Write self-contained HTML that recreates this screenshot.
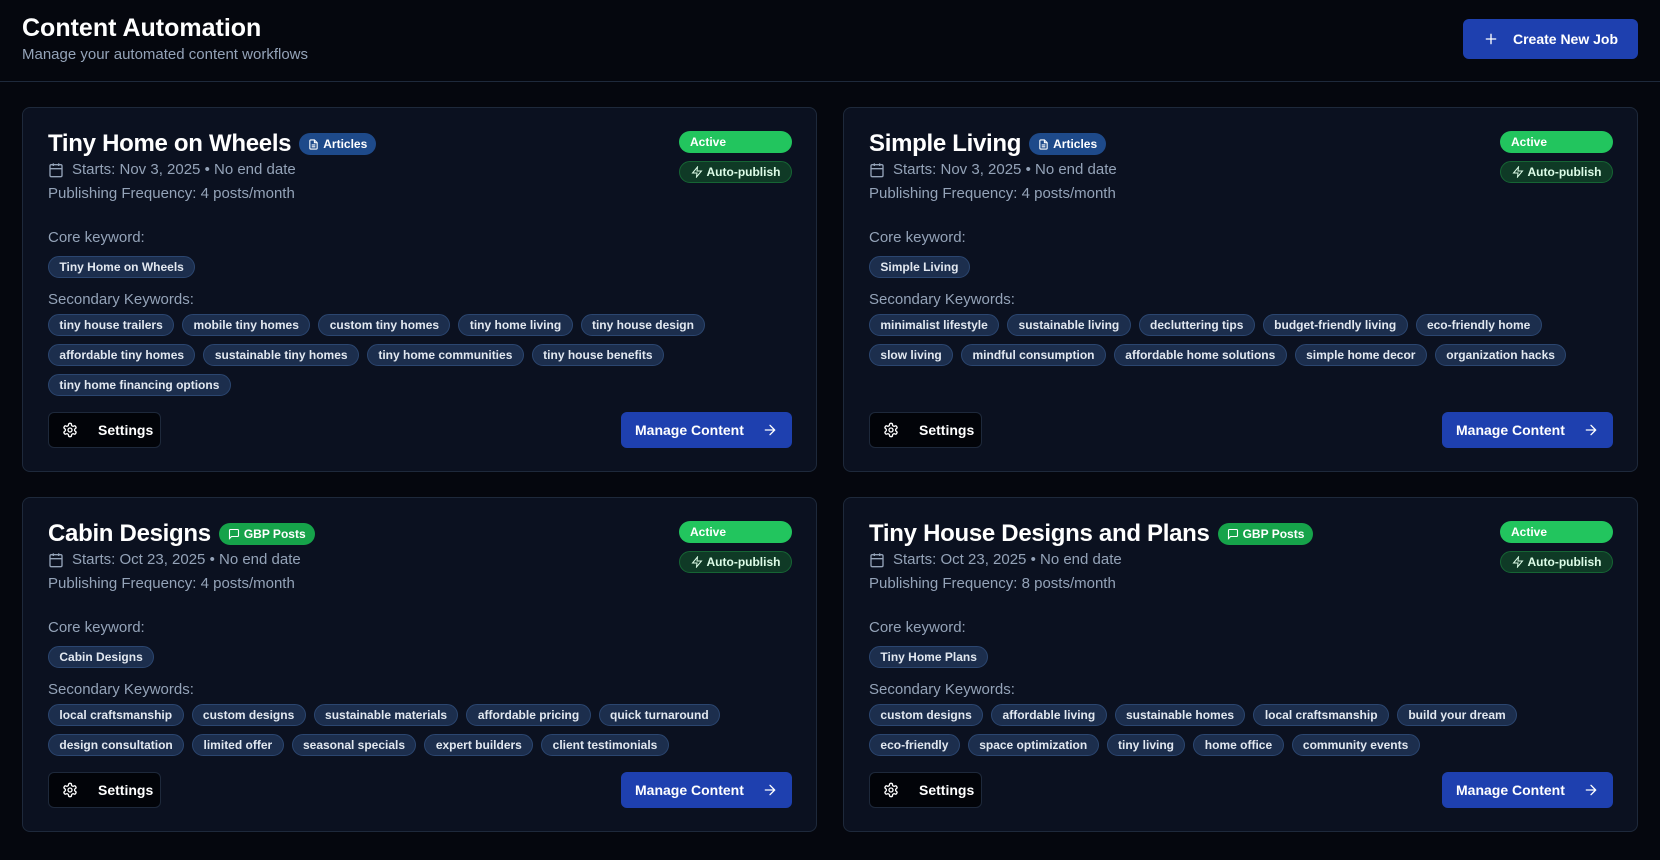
<!DOCTYPE html>
<html><head><meta charset="utf-8">
<style>
*{box-sizing:border-box;margin:0;padding:0}
body{width:1660px;height:860px;background:#05070e;font-family:"Liberation Sans",Arial,sans-serif;color:#fff;position:relative;overflow:hidden}
.h1{position:absolute;left:22px;top:13px;font-size:25px;font-weight:700;line-height:30px}
.sub{position:absolute;left:22px;top:45px;font-size:15px;color:#94a3b8;line-height:20px}
.hr{position:absolute;left:0;right:0;top:81px;height:1px;background:#1e293b}
.create{position:absolute;left:1463px;top:19px;width:175px;height:40px;background:#1e40af;border-radius:6px;display:flex;align-items:center;justify-content:center;gap:14px;font-size:14px;font-weight:700}
.card{position:absolute;width:795px;background:#0b1120;border:1px solid #1e293b;border-radius:8px;padding:22px 24px 23px 25px}
.title{display:flex;align-items:center;gap:8px;font-size:24px;font-weight:700;line-height:28px;letter-spacing:-0.3px}
.tb{display:inline-flex;align-items:center;gap:4px;height:22px;padding:0 9px;border-radius:11px;font-size:12px;font-weight:700;letter-spacing:0}
.art{background:#1e4a8a;color:#fff}
.gbp{background:#16a34a;color:#fff}
.row{display:flex;align-items:center;gap:8px;margin-top:2px;font-size:15px;line-height:20px;color:#94a3b8}
.freq{margin-top:4px;font-size:15px;line-height:20px;color:#94a3b8}
.lab{font-size:15px;line-height:20px;color:#94a3b8}
.chips{display:flex;flex-wrap:wrap;gap:8px;margin-top:4px}
.chip{height:22px;line-height:20px;padding:0 10.4px;border-radius:11px;background:#1c2e4d;border:1px solid #2b4670;font-size:12px;font-weight:700;color:#e2e8f0;white-space:nowrap}
.badges{position:absolute;right:24px;top:23px;width:113px}
.active{height:22px;border-radius:11px;background:#22c55e;font-size:12px;font-weight:700;line-height:22px;padding-left:11px}
.auto{margin-top:8px;height:22px;border-radius:11px;background:#0f3a26;border:1px solid #166534;font-size:12px;font-weight:700;line-height:20px;display:flex;align-items:center;justify-content:center;gap:4px;color:#dcfce7}
.btns{display:flex;justify-content:space-between;margin-top:16px}
.set{width:113px;height:36px;border:1px solid #1e293b;background:#020409;border-radius:6px;display:flex;align-items:center;gap:20px;padding-left:13px;font-size:14px;font-weight:700}
.man{width:171px;height:36px;background:#1e40af;border-radius:6px;display:flex;align-items:center;justify-content:space-between;padding:0 14px;font-size:14px;font-weight:700}
</style></head><body>
<div class="h1">Content Automation</div>
<div class="sub">Manage your automated content workflows</div>
<div class="create"><svg width="16" height="16" viewBox="0 0 24 24" fill="none" stroke="#fff" stroke-width="2" stroke-linecap="round"><path d="M12 5v14M5 12h14"/></svg>Create New Job</div>
<div class="hr"></div>

<div class="card" style="left:22px;top:107px">
 <div class="title">Tiny Home on Wheels <span class="tb art"><svg width="11" height="11" viewBox="0 0 24 24" fill="none" stroke="#fff" stroke-width="2.4"><path d="M14 2H6a2 2 0 0 0-2 2v16a2 2 0 0 0 2 2h12a2 2 0 0 0 2-2V8z"/><path d="M14 2v6h6M16 13H8M16 17H8"/></svg>Articles</span></div>
 <div class="row"><svg width="16" height="16" viewBox="0 0 24 24" fill="none" stroke="#94a3b8" stroke-width="2"><rect x="3" y="4" width="18" height="18" rx="2"/><path d="M16 2v4M8 2v4M3 10h18"/></svg>Starts: Nov 3, 2025 • No end date</div>
 <div class="freq">Publishing Frequency: 4 posts/month</div>
 <div class="lab" style="margin-top:24px">Core keyword:</div>
 <div class="chips" style="margin-top:8px"><span class="chip">Tiny Home on Wheels</span></div>
 <div class="lab" style="margin-top:12px">Secondary Keywords:</div>
 <div class="chips"><span class="chip">tiny house trailers</span><span class="chip">mobile tiny homes</span><span class="chip">custom tiny homes</span><span class="chip">tiny home living</span><span class="chip">tiny house design</span><span class="chip">affordable tiny homes</span><span class="chip">sustainable tiny homes</span><span class="chip">tiny home communities</span><span class="chip">tiny house benefits</span><span class="chip">tiny home financing options</span></div>
 <div class="btns"><div class="set"><svg width="16" height="16" viewBox="0 0 24 24" fill="none" stroke="#fff" stroke-width="2"><path d="M12.22 2h-.44a2 2 0 0 0-2 2v.18a2 2 0 0 1-1 1.73l-.43.25a2 2 0 0 1-2 0l-.15-.08a2 2 0 0 0-2.73.73l-.22.38a2 2 0 0 0 .73 2.73l.15.1a2 2 0 0 1 1 1.72v.51a2 2 0 0 1-1 1.74l-.15.09a2 2 0 0 0-.73 2.73l.22.38a2 2 0 0 0 2.73.73l.15-.08a2 2 0 0 1 2 0l.43.25a2 2 0 0 1 1 1.73V20a2 2 0 0 0 2 2h.44a2 2 0 0 0 2-2v-.18a2 2 0 0 1 1-1.73l.43-.25a2 2 0 0 1 2 0l.15.08a2 2 0 0 0 2.73-.73l.22-.39a2 2 0 0 0-.73-2.73l-.15-.08a2 2 0 0 1-1-1.74v-.5a2 2 0 0 1 1-1.74l.15-.09a2 2 0 0 0 .73-2.73l-.22-.38a2 2 0 0 0-2.73-.73l-.15.08a2 2 0 0 1-2 0l-.43-.25a2 2 0 0 1-1-1.73V4a2 2 0 0 0-2-2z"/><circle cx="12" cy="12" r="3"/></svg>Settings</div><div class="man">Manage Content<svg width="16" height="16" viewBox="0 0 24 24" fill="none" stroke="#fff" stroke-width="2" stroke-linecap="round"><path d="M5 12h14M12 5l7 7-7 7"/></svg></div></div>
 <div class="badges"><div class="active">Active</div><div class="auto"><svg width="12" height="12" viewBox="0 0 24 24" fill="none" stroke="#dcfce7" stroke-width="2"><path d="M13 2 3 14h9l-1 8 10-12h-9z"/></svg>Auto-publish</div></div>
</div>

<div class="card" style="left:843px;top:107px">
 <div class="title">Simple Living <span class="tb art"><svg width="11" height="11" viewBox="0 0 24 24" fill="none" stroke="#fff" stroke-width="2.4"><path d="M14 2H6a2 2 0 0 0-2 2v16a2 2 0 0 0 2 2h12a2 2 0 0 0 2-2V8z"/><path d="M14 2v6h6M16 13H8M16 17H8"/></svg>Articles</span></div>
 <div class="row"><svg width="16" height="16" viewBox="0 0 24 24" fill="none" stroke="#94a3b8" stroke-width="2"><rect x="3" y="4" width="18" height="18" rx="2"/><path d="M16 2v4M8 2v4M3 10h18"/></svg>Starts: Nov 3, 2025 • No end date</div>
 <div class="freq">Publishing Frequency: 4 posts/month</div>
 <div class="lab" style="margin-top:24px">Core keyword:</div>
 <div class="chips" style="margin-top:8px"><span class="chip">Simple Living</span></div>
 <div class="lab" style="margin-top:12px">Secondary Keywords:</div>
 <div class="chips"><span class="chip">minimalist lifestyle</span><span class="chip">sustainable living</span><span class="chip">decluttering tips</span><span class="chip">budget-friendly living</span><span class="chip">eco-friendly home</span><span class="chip">slow living</span><span class="chip">mindful consumption</span><span class="chip">affordable home solutions</span><span class="chip">simple home decor</span><span class="chip">organization hacks</span></div>
 <div class="btns" style="margin-top:46px"><div class="set"><svg width="16" height="16" viewBox="0 0 24 24" fill="none" stroke="#fff" stroke-width="2"><path d="M12.22 2h-.44a2 2 0 0 0-2 2v.18a2 2 0 0 1-1 1.73l-.43.25a2 2 0 0 1-2 0l-.15-.08a2 2 0 0 0-2.73.73l-.22.38a2 2 0 0 0 .73 2.73l.15.1a2 2 0 0 1 1 1.72v.51a2 2 0 0 1-1 1.74l-.15.09a2 2 0 0 0-.73 2.73l.22.38a2 2 0 0 0 2.73.73l.15-.08a2 2 0 0 1 2 0l.43.25a2 2 0 0 1 1 1.73V20a2 2 0 0 0 2 2h.44a2 2 0 0 0 2-2v-.18a2 2 0 0 1 1-1.73l.43-.25a2 2 0 0 1 2 0l.15.08a2 2 0 0 0 2.73-.73l.22-.39a2 2 0 0 0-.73-2.73l-.15-.08a2 2 0 0 1-1-1.74v-.5a2 2 0 0 1 1-1.74l.15-.09a2 2 0 0 0 .73-2.73l-.22-.38a2 2 0 0 0-2.73-.73l-.15.08a2 2 0 0 1-2 0l-.43-.25a2 2 0 0 1-1-1.73V4a2 2 0 0 0-2-2z"/><circle cx="12" cy="12" r="3"/></svg>Settings</div><div class="man">Manage Content<svg width="16" height="16" viewBox="0 0 24 24" fill="none" stroke="#fff" stroke-width="2" stroke-linecap="round"><path d="M5 12h14M12 5l7 7-7 7"/></svg></div></div>
 <div class="badges"><div class="active">Active</div><div class="auto"><svg width="12" height="12" viewBox="0 0 24 24" fill="none" stroke="#dcfce7" stroke-width="2"><path d="M13 2 3 14h9l-1 8 10-12h-9z"/></svg>Auto-publish</div></div>
</div>

<div class="card" style="left:22px;top:497px">
 <div class="title">Cabin Designs <span class="tb gbp"><svg width="12" height="12" viewBox="0 0 24 24" fill="none" stroke="#fff" stroke-width="2.2"><path d="M21 15a2 2 0 0 1-2 2H7l-4 4V5a2 2 0 0 1 2-2h14a2 2 0 0 1 2 2z"/></svg>GBP Posts</span></div>
 <div class="row"><svg width="16" height="16" viewBox="0 0 24 24" fill="none" stroke="#94a3b8" stroke-width="2"><rect x="3" y="4" width="18" height="18" rx="2"/><path d="M16 2v4M8 2v4M3 10h18"/></svg>Starts: Oct 23, 2025 • No end date</div>
 <div class="freq">Publishing Frequency: 4 posts/month</div>
 <div class="lab" style="margin-top:24px">Core keyword:</div>
 <div class="chips" style="margin-top:8px"><span class="chip">Cabin Designs</span></div>
 <div class="lab" style="margin-top:12px">Secondary Keywords:</div>
 <div class="chips"><span class="chip">local craftsmanship</span><span class="chip">custom designs</span><span class="chip">sustainable materials</span><span class="chip">affordable pricing</span><span class="chip">quick turnaround</span><span class="chip">design consultation</span><span class="chip">limited offer</span><span class="chip">seasonal specials</span><span class="chip">expert builders</span><span class="chip">client testimonials</span></div>
 <div class="btns"><div class="set"><svg width="16" height="16" viewBox="0 0 24 24" fill="none" stroke="#fff" stroke-width="2"><path d="M12.22 2h-.44a2 2 0 0 0-2 2v.18a2 2 0 0 1-1 1.73l-.43.25a2 2 0 0 1-2 0l-.15-.08a2 2 0 0 0-2.73.73l-.22.38a2 2 0 0 0 .73 2.73l.15.1a2 2 0 0 1 1 1.72v.51a2 2 0 0 1-1 1.74l-.15.09a2 2 0 0 0-.73 2.73l.22.38a2 2 0 0 0 2.73.73l.15-.08a2 2 0 0 1 2 0l.43.25a2 2 0 0 1 1 1.73V20a2 2 0 0 0 2 2h.44a2 2 0 0 0 2-2v-.18a2 2 0 0 1 1-1.73l.43-.25a2 2 0 0 1 2 0l.15.08a2 2 0 0 0 2.73-.73l.22-.39a2 2 0 0 0-.73-2.73l-.15-.08a2 2 0 0 1-1-1.74v-.5a2 2 0 0 1 1-1.74l.15-.09a2 2 0 0 0 .73-2.73l-.22-.38a2 2 0 0 0-2.73-.73l-.15.08a2 2 0 0 1-2 0l-.43-.25a2 2 0 0 1-1-1.73V4a2 2 0 0 0-2-2z"/><circle cx="12" cy="12" r="3"/></svg>Settings</div><div class="man">Manage Content<svg width="16" height="16" viewBox="0 0 24 24" fill="none" stroke="#fff" stroke-width="2" stroke-linecap="round"><path d="M5 12h14M12 5l7 7-7 7"/></svg></div></div>
 <div class="badges"><div class="active">Active</div><div class="auto"><svg width="12" height="12" viewBox="0 0 24 24" fill="none" stroke="#dcfce7" stroke-width="2"><path d="M13 2 3 14h9l-1 8 10-12h-9z"/></svg>Auto-publish</div></div>
</div>

<div class="card" style="left:843px;top:497px">
 <div class="title">Tiny House Designs and Plans <span class="tb gbp"><svg width="12" height="12" viewBox="0 0 24 24" fill="none" stroke="#fff" stroke-width="2.2"><path d="M21 15a2 2 0 0 1-2 2H7l-4 4V5a2 2 0 0 1 2-2h14a2 2 0 0 1 2 2z"/></svg>GBP Posts</span></div>
 <div class="row"><svg width="16" height="16" viewBox="0 0 24 24" fill="none" stroke="#94a3b8" stroke-width="2"><rect x="3" y="4" width="18" height="18" rx="2"/><path d="M16 2v4M8 2v4M3 10h18"/></svg>Starts: Oct 23, 2025 • No end date</div>
 <div class="freq">Publishing Frequency: 8 posts/month</div>
 <div class="lab" style="margin-top:24px">Core keyword:</div>
 <div class="chips" style="margin-top:8px"><span class="chip">Tiny Home Plans</span></div>
 <div class="lab" style="margin-top:12px">Secondary Keywords:</div>
 <div class="chips" style="max-width:680px"><span class="chip">custom designs</span><span class="chip">affordable living</span><span class="chip">sustainable homes</span><span class="chip">local craftsmanship</span><span class="chip">build your dream</span><span class="chip">eco-friendly</span><span class="chip">space optimization</span><span class="chip">tiny living</span><span class="chip">home office</span><span class="chip">community events</span></div>
 <div class="btns"><div class="set"><svg width="16" height="16" viewBox="0 0 24 24" fill="none" stroke="#fff" stroke-width="2"><path d="M12.22 2h-.44a2 2 0 0 0-2 2v.18a2 2 0 0 1-1 1.73l-.43.25a2 2 0 0 1-2 0l-.15-.08a2 2 0 0 0-2.73.73l-.22.38a2 2 0 0 0 .73 2.73l.15.1a2 2 0 0 1 1 1.72v.51a2 2 0 0 1-1 1.74l-.15.09a2 2 0 0 0-.73 2.73l.22.38a2 2 0 0 0 2.73.73l.15-.08a2 2 0 0 1 2 0l.43.25a2 2 0 0 1 1 1.73V20a2 2 0 0 0 2 2h.44a2 2 0 0 0 2-2v-.18a2 2 0 0 1 1-1.73l.43-.25a2 2 0 0 1 2 0l.15.08a2 2 0 0 0 2.73-.73l.22-.39a2 2 0 0 0-.73-2.73l-.15-.08a2 2 0 0 1-1-1.74v-.5a2 2 0 0 1 1-1.74l.15-.09a2 2 0 0 0 .73-2.73l-.22-.38a2 2 0 0 0-2.73-.73l-.15.08a2 2 0 0 1-2 0l-.43-.25a2 2 0 0 1-1-1.73V4a2 2 0 0 0-2-2z"/><circle cx="12" cy="12" r="3"/></svg>Settings</div><div class="man">Manage Content<svg width="16" height="16" viewBox="0 0 24 24" fill="none" stroke="#fff" stroke-width="2" stroke-linecap="round"><path d="M5 12h14M12 5l7 7-7 7"/></svg></div></div>
 <div class="badges"><div class="active">Active</div><div class="auto"><svg width="12" height="12" viewBox="0 0 24 24" fill="none" stroke="#dcfce7" stroke-width="2"><path d="M13 2 3 14h9l-1 8 10-12h-9z"/></svg>Auto-publish</div></div>
</div>
</body></html>
